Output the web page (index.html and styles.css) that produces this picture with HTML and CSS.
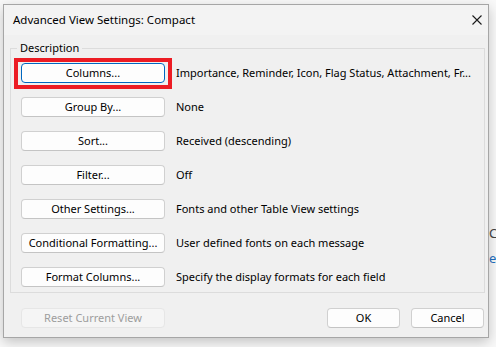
FILE: index.html
```html
<!DOCTYPE html>
<html lang="en">
<head>
  <meta charset="UTF-8" />
  <title>Advanced View Settings: Compact</title>
  <link rel="stylesheet" href="styles.css">
</head>
<body>
  <!-- what peeks out from behind the dialog -->
  <div class="behind">
    <span class="peek peek-dark">C</span>
    <span class="peek peek-link">e</span>
  </div>

  <div class="dialog">
    <div class="titlebar">
      <span class="title">Advanced View Settings: Compact</span>
      <svg class="close" width="10" height="10" viewBox="0 0 10 10">
        <path d="M0.5 0.5 L9.5 9.5 M9.5 0.5 L0.5 9.5" stroke="#1a1a1a" stroke-width="1.1" fill="none"/>
      </svg>
    </div>

    <div class="content">
      <div class="group">
        <span class="legend">Description</span>
        <div class="rows">
          <div class="cell">
            <button class="btn focused">Columns...</button>
            <span class="mark"></span>
          </div>
          <span class="desc">Importance, Reminder, Icon, Flag Status, Attachment, Fr...</span>

          <button class="btn">Group By...</button>
          <span class="desc">None</span>

          <button class="btn">Sort...</button>
          <span class="desc">Received (descending)</span>

          <button class="btn">Filter...</button>
          <span class="desc">Off</span>

          <button class="btn">Other Settings...</button>
          <span class="desc">Fonts and other Table View settings</span>

          <button class="btn">Conditional Formatting...</button>
          <span class="desc">User defined fonts on each message</span>

          <button class="btn">Format Columns...</button>
          <span class="desc">Specify the display formats for each field</span>
        </div>
      </div>

      <div class="footer">
        <button class="btn reset" disabled>Reset Current View</button>
        <div class="actions">
          <button class="btn small">OK</button>
          <button class="btn small">Cancel</button>
        </div>
      </div>
    </div>
  </div>
</body>
</html>
```

FILE: styles.css
```css
* { box-sizing: border-box; }
html, body {
  margin: 0;
  padding: 0;
}
body {
  width: 496px;
  height: 347px;
  overflow: hidden;
  position: relative;
  background: #f9f9f9;
  font-family: 'Noto Sans', sans-serif;
  font-size: 11px;
  color: #000;
}
/* Fondo detrás del diálogo */
.behind {
  position: absolute;
  left: 0;
  top: 0;
  width: 496px;
  height: 347px;
}
.peek {
  position: absolute;
  left: 489px;
  font-size: 13px;
  line-height: 14px;
}
.peek-dark { top: 226px; color: #444; }
.peek-link { top: 251px; color: #1f6fc0; }

/* Ventana */
.dialog {
  position: relative;
  margin: 4px 0 0 3px;
  width: 486px;
  height: 334px;
  border: 1px solid #a6a6a6;
  background: #f0f0f0;
  box-shadow: 0 4px 12px rgba(0,0,0,0.22);
  display: flex;
  flex-direction: column;
}
.titlebar {
  height: 30px;
  background: #f3f3f3;
  display: flex;
  align-items: center;
  justify-content: space-between;
  padding: 0 6px 0 9px;
}
.title {
  font-size: 11.5px;
  line-height: 16px;
  margin-top: -1px;
}
.content {
  flex: 1;
  padding: 13px 3px 0 6px;
}

/* Grupo "Description" */
.group {
  position: relative;
  border: 1px solid #dcdcdc;
  width: 475px;
  padding: 14px 0 5px 10px;
}
.legend {
  position: absolute;
  left: 6px;
  top: -9px;
  padding: 0 3px;
  background: #f0f0f0;
  line-height: 16px;
}
.rows {
  display: grid;
  grid-template-columns: 144px 1fr;
  grid-auto-rows: 20px;
  row-gap: 14px;
  column-gap: 11px;
  align-items: center;
}
.cell {
  position: relative;
  height: 20px;
}
.desc {
  white-space: nowrap;
  overflow: hidden;
  line-height: 16px;
}

/* Botones */
.btn {
  width: 144px;
  height: 20px;
  padding: 0;
  border: 1px solid #d0d0d0;
  border-bottom-color: #c4c4c4;
  border-radius: 4px;
  background: #fdfdfd;
  font-family: inherit;
  font-size: 11px;
  color: #000;
  line-height: 16px;
}
.btn.focused {
  border-color: #0067c0;
  box-shadow: inset 0 0 0 1px #fff;
}
.btn.small {
  width: 73px;
}
.btn.reset {
  background: #f5f5f5;
  border-color: #e6e6e6;
  color: #9d9d9d;
}
.mark {
  position: absolute;
  left: -7px;
  top: -5px;
  right: -7px;
  bottom: -6px;
  border: 4px solid #ec1c24;
  pointer-events: none;
}

/* Pie */
.footer {
  display: flex;
  justify-content: space-between;
  padding: 15px 0 0 11px;
  width: 474px;
}
.actions {
  display: flex;
  gap: 11px;
}
```
